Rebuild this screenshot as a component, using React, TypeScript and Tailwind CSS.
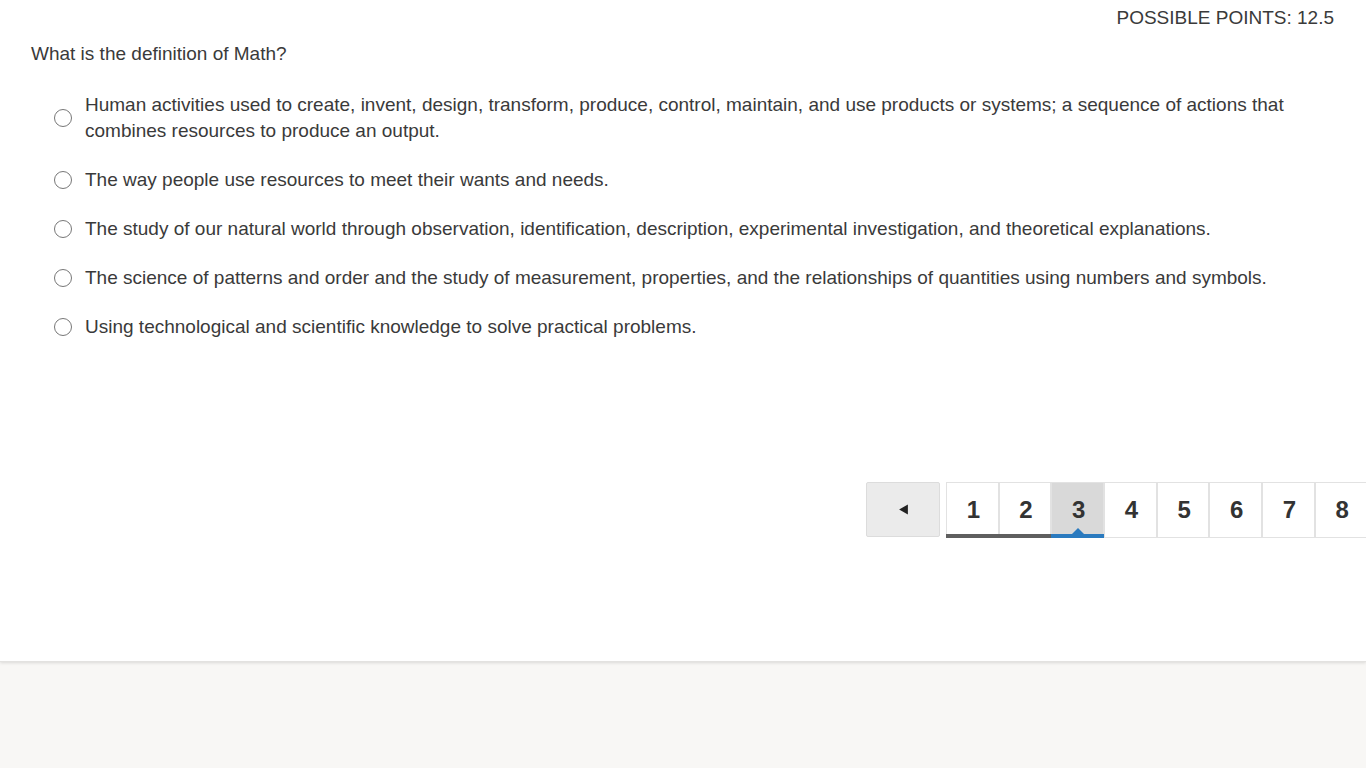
import React from "react";

const options = [
  "Human activities used to create, invent, design, transform, produce, control, maintain, and use products or systems; a sequence of actions that combines resources to produce an output.",
  "The way people use resources to meet their wants and needs.",
  "The study of our natural world through observation, identification, description, experimental investigation, and theoretical explanations.",
  "The science of patterns and order and the study of measurement, properties, and the relationships of quantities using numbers and symbols.",
  "Using technological and scientific knowledge to solve practical problems.",
];

const pages = [1, 2, 3, 4, 5, 6, 7, 8];

export default function App() {
  return (
    <div
      className="w-[1366px] h-[768px] overflow-hidden bg-[#f8f7f5] text-[#333333] flex flex-col"
      style={{ fontFamily: "'Liberation Sans', Arial, sans-serif" }}
    >
      <div className="h-[662px] bg-white shadow-[0_1px_3px_rgba(0,0,0,0.12)] border-b border-[#e3e2e0] flex flex-col shrink-0">
        <div className="flex justify-end pr-[32px] pt-[7px] text-[19px] leading-[22px] text-[#3a3a3a]">
          POSSIBLE POINTS: 12.5
        </div>
        <div className="pl-[31px] pt-[14px] text-[19px] leading-[22px] text-[#3a3a3a]">
          What is the definition of Math?
        </div>
        <div className="flex flex-col gap-[23px] pt-[27px] pl-[54px] pr-[40px]">
          {options.map((o, i) => (
            <div key={i} className="flex items-center gap-[13px]">
              <span className="w-[18px] h-[18px] rounded-full border border-[#777777] bg-white shrink-0" />
              <span className="text-[19px] leading-[26px] text-[#3a3a3a]">{o}</span>
            </div>
          ))}
        </div>
        <div className="flex pl-[866px] pt-[142px] w-[1500px]">
          <button className="w-[74px] h-[55px] bg-[#ebebeb] border border-[#dcdcdc] rounded-[2px] flex items-center justify-center shrink-0">
            <svg width="11" height="11" viewBox="0 0 10 10">
              <polygon points="9,0.5 9,9.5 1,5" fill="#222222" />
            </svg>
          </button>
          <div className="flex ml-[6px]">
            {pages.map((p) => {
              const active = p === 3;
              const done = p < 3;
              return (
                <div
                  key={p}
                  className={
                    "relative w-[52.7px] h-[56px] border border-[#e2e2e2] flex items-center justify-center pl-[2px] text-[24px] font-bold text-[#333333] shrink-0 " +
                    (active ? "bg-[#d9d9d9]" : "bg-white")
                  }
                >
                  {p}
                  {done && <span className="absolute left-[-1px] right-[-1px] bottom-[-1px] h-[4px] bg-[#5f5f5f]" />}
                  {active && (
                    <>
                      <span className="absolute left-[-1px] right-[-1px] bottom-[-1px] h-[4px] bg-[#2a7abf]" />
                      <span className="absolute left-1/2 -translate-x-1/2 bottom-[3px] w-0 h-0 border-l-[6px] border-r-[6px] border-b-[6px] border-l-transparent border-r-transparent border-b-[#2a7abf]" />
                    </>
                  )}
                </div>
              );
            })}
          </div>
        </div>
      </div>
      <div className="flex-1" />
    </div>
  );
}
